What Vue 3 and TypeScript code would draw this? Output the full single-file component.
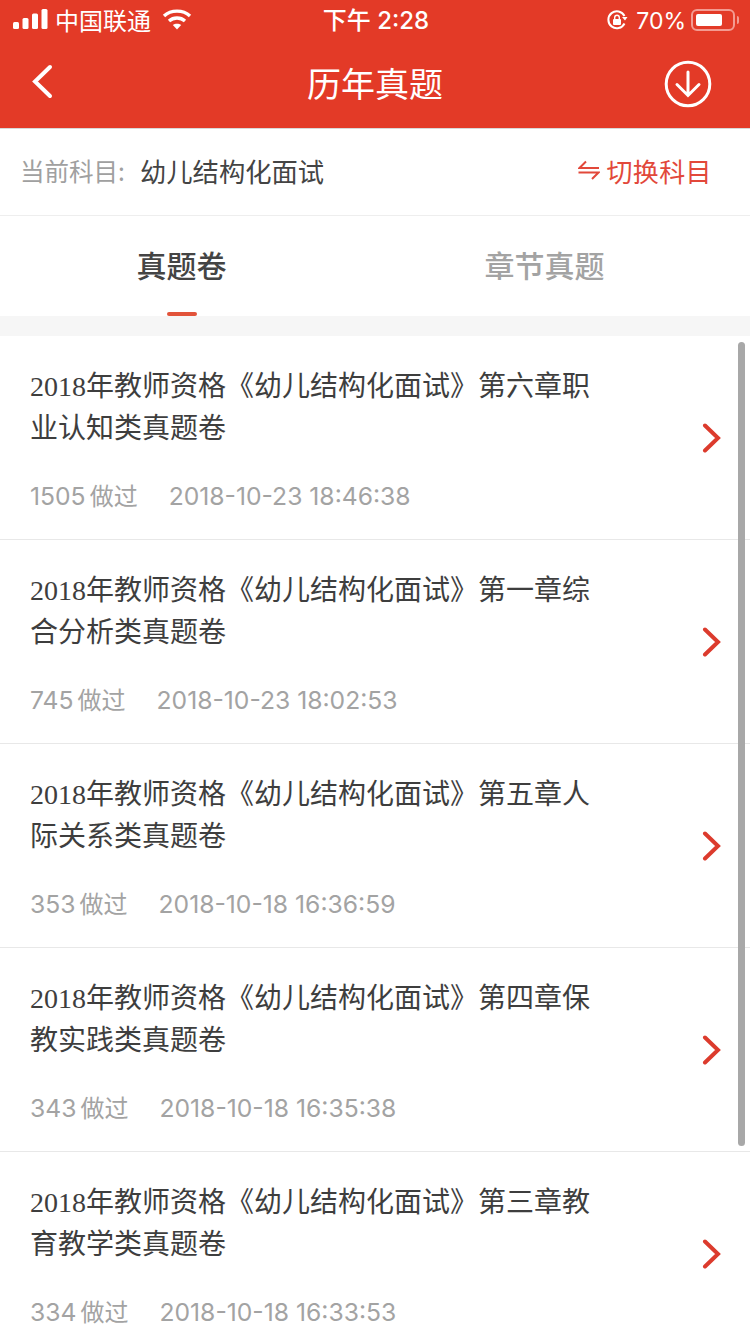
<script setup lang="ts">
interface Paper {
  line1: string
  line2: string
  count: string
  time: string
}

const papers: Paper[] = [
  { line1: '2018年教师资格《幼儿结构化面试》第六章职', line2: '业认知类真题卷', count: '1505', time: '2018-10-23 18:46:38' },
  { line1: '2018年教师资格《幼儿结构化面试》第一章综', line2: '合分析类真题卷', count: '745', time: '2018-10-23 18:02:53' },
  { line1: '2018年教师资格《幼儿结构化面试》第五章人', line2: '际关系类真题卷', count: '353', time: '2018-10-18 16:36:59' },
  { line1: '2018年教师资格《幼儿结构化面试》第四章保', line2: '教实践类真题卷', count: '343', time: '2018-10-18 16:35:38' },
  { line1: '2018年教师资格《幼儿结构化面试》第三章教', line2: '育教学类真题卷', count: '334', time: '2018-10-18 16:33:53' },
]
</script>

<template>
  <div class="page">
    <header class="top">
      <div class="status">
        <div class="status-left">
          <svg class="signal" width="36" height="20" viewBox="0 0 36 20" fill="#fff">
            <rect x="0" y="13" width="6" height="7" rx="1.5" />
            <rect x="9.5" y="9" width="6" height="11" rx="1.5" />
            <rect x="19" y="4.5" width="6" height="15.5" rx="1.5" />
            <rect x="28.5" y="0" width="6" height="20" rx="1.5" />
          </svg>
          <span class="carrier">中国联通</span>
          <svg class="wifi" width="30" height="22" viewBox="0 0 30 22" fill="none" stroke="#fff" stroke-width="3.4">
            <path d="M2 8 C9 1.5 21 1.5 28 8" />
            <path d="M7 13 C11.500 9 18.500 9 23 13" />
            <path d="M15 21.500 L10.800 17 C13 15.200 17 15.200 19.200 17 Z" fill="#fff" stroke="none" />
          </svg>
        </div>
        <span class="clock">下午 2:28</span>
        <div class="status-right">
          <svg width="22" height="22" viewBox="0 0 22 22" fill="none">
            <path d="M18.500 14.500 A8.500 8.500 0 1 1 18.500 7" stroke="#fff" stroke-width="2" />
            <path d="M16 8 L21.500 8 L19 11.500 Z" fill="#fff" />
            <rect x="7" y="10" width="8" height="6" rx="1" fill="#fff" />
            <path d="M8.700 10 V8.500 a2.300 2.300 0 0 1 4.600 0 V10" stroke="#fff" stroke-width="1.400" />
          </svg>
          <span class="percent">70%</span>
          <div class="battery">
            <div class="battery-fill"></div>
          </div>
          <div class="battery-cap"></div>
        </div>
      </div>
      <nav class="nav">
        <svg class="back" width="24" height="36" viewBox="0 0 24 36" fill="none" stroke="#fff" stroke-width="4" stroke-linecap="round">
          <path d="M20 3 L5 17.500 L20 32" />
        </svg>
        <h1 class="nav-title">历年真题</h1>
        <svg class="download" width="48" height="48" viewBox="0 0 48 48" fill="none" stroke="#fff" stroke-width="3">
          <circle cx="24" cy="24" r="21.800" />
          <path d="M24 12 V35 M13 24.500 L24 35.500 L35 24.500" stroke-linecap="round" />
        </svg>
      </nav>
    </header>

    <section class="subject">
      <span class="subject-label">当前科目:</span>
      <span class="subject-name">幼儿结构化面试</span>
      <span class="switch">
        <svg width="22" height="20" viewBox="0 0 22 20" fill="none" stroke="#e2483a" stroke-width="2">
          <path d="M8 1.500 L1.500 8 H21" />
          <path d="M0.500 12.500 H20.500 L14 19" />
        </svg>
        切换科目
      </span>
    </section>

    <section class="tabs">
      <div class="tab tab-active"><span class="tab-text">真题卷</span><i class="tab-line"></i></div>
      <div class="tab"><span class="tab-text">章节真题</span></div>
    </section>

    <div class="list-wrap">
      <article v-for="paper in papers" :key="paper.time" class="item">
        <div class="item-body">
          <p class="item-title">{{ paper.line1 }}<br />{{ paper.line2 }}</p>
          <p class="item-meta">
            <span class="count">{{ paper.count }}<span class="count-unit">做过</span></span>
            <span>{{ paper.time }}</span>
          </p>
        </div>
        <svg class="chevron" width="20" height="30" viewBox="0 0 20 30" fill="none" stroke="#dc3b2d" stroke-width="4" stroke-linecap="round">
          <path d="M3 2.500 L16 15 L3 27.500" />
        </svg>
      </article>
      <div class="scrollbar"></div>
    </div>
  </div>
</template>

<style>
html,
body {
  margin: 0;
  background: #fff;
}
</style>

<style scoped>
.page {
  position: relative;
  width: 750px;
  height: 1334px;
  overflow: hidden;
  background: #fff;
  font-family: "Noto Sans CJK SC", sans-serif;
}

.top {
  height: 128px;
  background: #e33a27;
  color: #fff;
  border-bottom: 1px solid #d8d8d8;
}

.status {
  display: grid;
  grid-template-columns: 1fr auto 1fr;
  align-items: center;
  height: 40px;
  padding: 0 11px 0 13px;
  font-size: 24px;
}

.status-left,
.status-right {
  display: flex;
  align-items: center;
}

.status-right {
  justify-content: flex-end;
}

.signal {
  margin-top: -2px;
}

.carrier {
  margin-left: 6px;
  line-height: 1;
}

.wifi {
  margin-left: 11px;
  margin-top: -3px;
}

.clock {
  padding-top: 2px;
  font-family: Inter, "Noto Sans CJK SC", sans-serif;
  font-weight: 500;
  line-height: 1;
}

.percent {
  margin-left: 8px;
  padding-top: 2px;
  font-family: Inter, sans-serif;
  font-size: 23px;
  line-height: 1;
}

.battery {
  box-sizing: border-box;
  width: 44px;
  height: 22px;
  margin-left: 5px;
  padding: 3px;
  border: 2px solid #f39b92;
  border-radius: 6px;
}

.battery-fill {
  width: 26px;
  height: 100%;
  border-radius: 2px;
  background: #fff;
}

.battery-cap {
  width: 2px;
  height: 8px;
  margin-left: 2px;
  border-radius: 0 2px 2px 0;
  background: #f39b92;
}

.nav {
  display: grid;
  grid-template-columns: 1fr auto 1fr;
  align-items: center;
  height: 88px;
  padding: 0 38px 0 30px;
}

.back {
  margin-top: -4px;
}

.nav-title {
  margin: 0 0 2px 8px;
  font-size: 34px;
  font-weight: 400;
  line-height: 86px;
}

.download {
  justify-self: end;
}

.subject {
  display: flex;
  align-items: center;
  box-sizing: border-box;
  height: 87px;
  padding: 0 38px 4px 20px;
  border-bottom: 1px solid #eeeeee;
}

.subject-label {
  width: 120px;
  font-size: 24.500px;
  color: #a0a0a0;
}

.subject-name {
  flex: 1;
  font-size: 26.300px;
  color: #444;
}

.switch {
  display: flex;
  align-items: center;
  gap: 6px;
  font-size: 26px;
  letter-spacing: 0.4px;
  color: #e2483a;
}

.tabs {
  display: grid;
  grid-template-columns: 363px 363px;
  height: 100px;
}

.tab {
  position: relative;
  font-size: 30px;
  font-weight: 500;
  line-height: 96px;
  text-align: center;
  color: #a3a3a3;
}

.tab-active {
  color: #444;
}

.tab-line {
  position: absolute;
  left: 167px;
  bottom: 0;
  width: 30px;
  height: 4px;
  border-radius: 2px;
  background: #e2533a;
}

.list-wrap {
  position: relative;
  border-top: 20px solid #f6f6f6;
}

.item {
  box-sizing: border-box;
  display: flex;
  align-items: center;
  height: 204px;
  padding: 0 28px 0 30px;
  border-bottom: 1px solid #e8e8e8;
}

.item-body {
  flex: 1;
  padding-top: 8px;
}

.item-title {
  margin: 0;
  font-family: "Liberation Serif", "Noto Sans CJK SC", serif;
  font-size: 28px;
  line-height: 42px;
  color: #3e3e3e;
  white-space: nowrap;
}

.item-meta {
  display: flex;
  gap: 31px;
  margin: 26px 0 0;
  font-family: Inter, "Noto Sans CJK SC", sans-serif;
  font-size: 24.700px;
  line-height: 40px;
  color: #a3a3a3;
}

.count-unit {
  margin-left: 4px;
  font-size: 24px;
}

.chevron {
  flex: none;
}

.scrollbar {
  position: absolute;
  top: 6px;
  left: 738px;
  width: 7px;
  height: 804px;
  border-radius: 4px;
  background: #a8a8a8;
}
</style>
